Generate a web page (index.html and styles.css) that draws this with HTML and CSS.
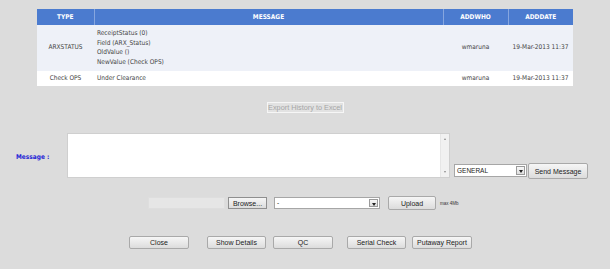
FILE: index.html
```html
<!DOCTYPE html>
<html>
<head>
<meta charset="utf-8">
<link rel="stylesheet" href="styles.css">
</head>
<body>
<div class="page">
  <table class="grid">
    <colgroup>
      <col class="col-type"><col class="col-msg"><col class="col-who"><col class="col-date">
    </colgroup>
    <thead>
      <tr><th>TYPE</th><th>MESSAGE</th><th>ADDWHO</th><th>ADDDATE</th></tr>
    </thead>
    <tbody>
      <tr class="row-alt">
        <td class="c">ARXSTATUS</td>
        <td class="msg">ReceiptStatus (0)<br>Field (ARX_Status)<br>OldValue ()<br>NewValue (Check OPS)</td>
        <td class="c">wmaruna</td>
        <td class="c">19-Mar-2013 11:37</td>
      </tr>
      <tr class="row-plain">
        <td class="c">Check OPS</td>
        <td class="msg">Under Clearance</td>
        <td class="c">wmaruna</td>
        <td class="c">19-Mar-2013 11:37</td>
      </tr>
    </tbody>
  </table>

  <div class="export-row">
    <button class="btn btn-disabled">Export History to Excel</button>
  </div>

  <div class="message-row">
    <label class="msg-label">Message :</label>
    <div class="memo">
      <textarea class="memo-text"></textarea>
      <div class="vscroll"><span class="arr arr-up"></span><span class="arr arr-down"></span></div>
    </div>
    <div class="combo combo-type"><span class="combo-text">GENERAL</span><span class="combo-arrow"></span></div>
    <button class="btn btn-send">Send Message</button>
  </div>

  <div class="upload-row">
    <span class="file-path"></span>
    <button class="btn btn-browse">Browse...</button>
    <div class="combo combo-doc"><span class="combo-text">-</span><span class="combo-arrow"></span></div>
    <button class="btn btn-upload">Upload</button>
    <span class="max-note">max 4Mb</span>
  </div>

  <div class="action-row">
    <button class="btn btn-act">Close</button>
    <button class="btn btn-act ml-18">Show Details</button>
    <button class="btn btn-act ml-7">QC</button>
    <button class="btn btn-act ml-14">Serial Check</button>
    <button class="btn btn-act ml-6">Putaway Report</button>
  </div>
</div>
</body>
</html>
```

FILE: styles.css
```css
* { box-sizing: border-box; }

html, body {
  margin: 0;
  padding: 0;
  background: #dcdcdc;
}

.page {
  padding-top: 9px;
  font-family: "DejaVu Sans Condensed", "DejaVu Sans", sans-serif;
  font-stretch: condensed;
  font-size: 6.5px;
  color: #333;
}

/* ---------- grid ---------- */
.grid {
  margin-left: 37px;
  width: 536px;
  border-collapse: collapse;
  table-layout: fixed;
}
.col-type { width: 57px; }
.col-msg { width: 349px; }
.col-who { width: 65px; }
.col-date { width: 65px; }

.grid th {
  height: 16px;
  padding: 0;
  background: #4b7bcf;
  color: #fff;
  font-weight: bold;
  font-size: 6.5px;
  text-align: center;
  border-left: 1px solid #86a6df;
}
.grid th:first-child { border-left: none; }

.grid td {
  padding: 0 1px;
  line-height: 9.5px;
  color: #444;
  vertical-align: middle;
}
.grid td.c { text-align: center; white-space: nowrap; }
.grid td.msg { padding-left: 3px; text-align: left; }

.row-alt td { background: #eef1f8; height: 46px; padding-top: 4px; padding-bottom: 4px; }
.row-plain td { background: #ffffff; height: 15px; }

/* ---------- buttons ---------- */
.btn {
  display: inline-flex;
  align-items: center;
  justify-content: center;
  padding: 0;
  margin: 0;
  font-family: "Liberation Sans", Arial, sans-serif;
  font-size: 6.5px;
  color: #222;
  background: linear-gradient(#f6f6f6, #dcdcdc);
  border: 1px solid #a9a9a9;
  border-radius: 2px;
  white-space: nowrap;
}

.btn-disabled {
  width: 77px;
  height: 11px;
  background: #e2e2e2;
  border: 1px solid #f6f6f6;
  border-radius: 0;
  color: #a6a6a6;
  font-size: 7.3px;
}

.export-row {
  margin-top: 16px;
  display: flex;
  justify-content: center;
}

/* ---------- message row ---------- */
.message-row {
  margin-top: 20px;
  display: flex;
  align-items: flex-start;
  padding-left: 15px;
}

.msg-label {
  width: 52px;
  padding-left: 1px;
  margin-top: 20px;
  font-family: "DejaVu Sans Condensed", "DejaVu Sans", sans-serif;
  font-weight: bold;
  font-size: 6.5px;
  color: #2323d6;
}

.memo {
  width: 383px;
  height: 45px;
  display: flex;
  border: 1px solid #cfcfcf;
  background: #fff;
}
.memo-text {
  flex: 1;
  border: none;
  resize: none;
  outline: none;
  background: #fff;
  margin: 0;
  padding: 0;
}
.vscroll {
  width: 9px;
  background: #f1f1f1;
  border-left: 1px solid #e6e6e6;
  display: flex;
  flex-direction: column;
  justify-content: space-between;
  align-items: center;
  padding: 4px 0;
}
.arr {
  width: 0;
  height: 0;
  border-left: 1.5px solid transparent;
  border-right: 1.5px solid transparent;
}
.arr-up { border-bottom: 2px solid #8a8a8a; }
.arr-down { border-top: 2px solid #8a8a8a; }

.combo {
  display: flex;
  align-items: stretch;
  background: #fff;
  border: 1px solid #a6a6a6;
  height: 13px;
}
.combo-text {
  flex: 1;
  font-family: "Liberation Sans", Arial, sans-serif;
  font-size: 6.5px;
  color: #222;
  line-height: 11px;
  padding-left: 2px;
}
.combo-arrow {
  width: 9px;
  margin: 1px;
  border: 1px solid #9a9a9a;
  background: linear-gradient(#f8f8f8, #dedede);
  position: relative;
}
.combo-arrow::after {
  content: "";
  position: absolute;
  left: 1.5px;
  top: 3px;
  border-left: 2px solid transparent;
  border-right: 2px solid transparent;
  border-top: 3px solid #222;
}

.combo-type {
  width: 73px;
  margin-left: 4px;
  margin-top: 31px;
}
.btn-send {
  width: 60px;
  height: 16px;
  margin-left: 1px;
  margin-top: 30px;
  font-size: 7px;
}

/* ---------- upload row ---------- */
.upload-row {
  margin-top: 17px;
  display: flex;
  align-items: center;
  padding-left: 148px;
  height: 14px;
}
.file-path {
  width: 77px;
  height: 12px;
  background: #e6e6e6;
  border: 1px solid #dedede;
}
.btn-browse {
  width: 39px;
  height: 12px;
  margin-left: 3px;
  border-radius: 0;
  border-color: #8f8f8f;
  font-size: 7px;
}
.combo-doc {
  width: 106px;
  height: 12px;
  margin-left: 7px;
}
.combo-doc .combo-text { line-height: 10px; }
.btn-upload {
  width: 48px;
  height: 14px;
  margin-left: 8px;
  font-size: 7px;
}
.max-note {
  margin-left: 4px;
  font-family: "Liberation Sans", Arial, sans-serif;
  font-size: 4.5px;
  color: #333;
}

/* ---------- actions ---------- */
.action-row {
  margin-top: 26px;
  display: flex;
  padding-left: 129px;
}
.btn-act {
  width: 60px;
  height: 13px;
  font-size: 7px;
}
.ml-18 { margin-left: 18px; width: 59px; }
.ml-7 { margin-left: 7px; }
.ml-14 { margin-left: 14px; width: 59px; }
.ml-6 { margin-left: 6px; }
```
